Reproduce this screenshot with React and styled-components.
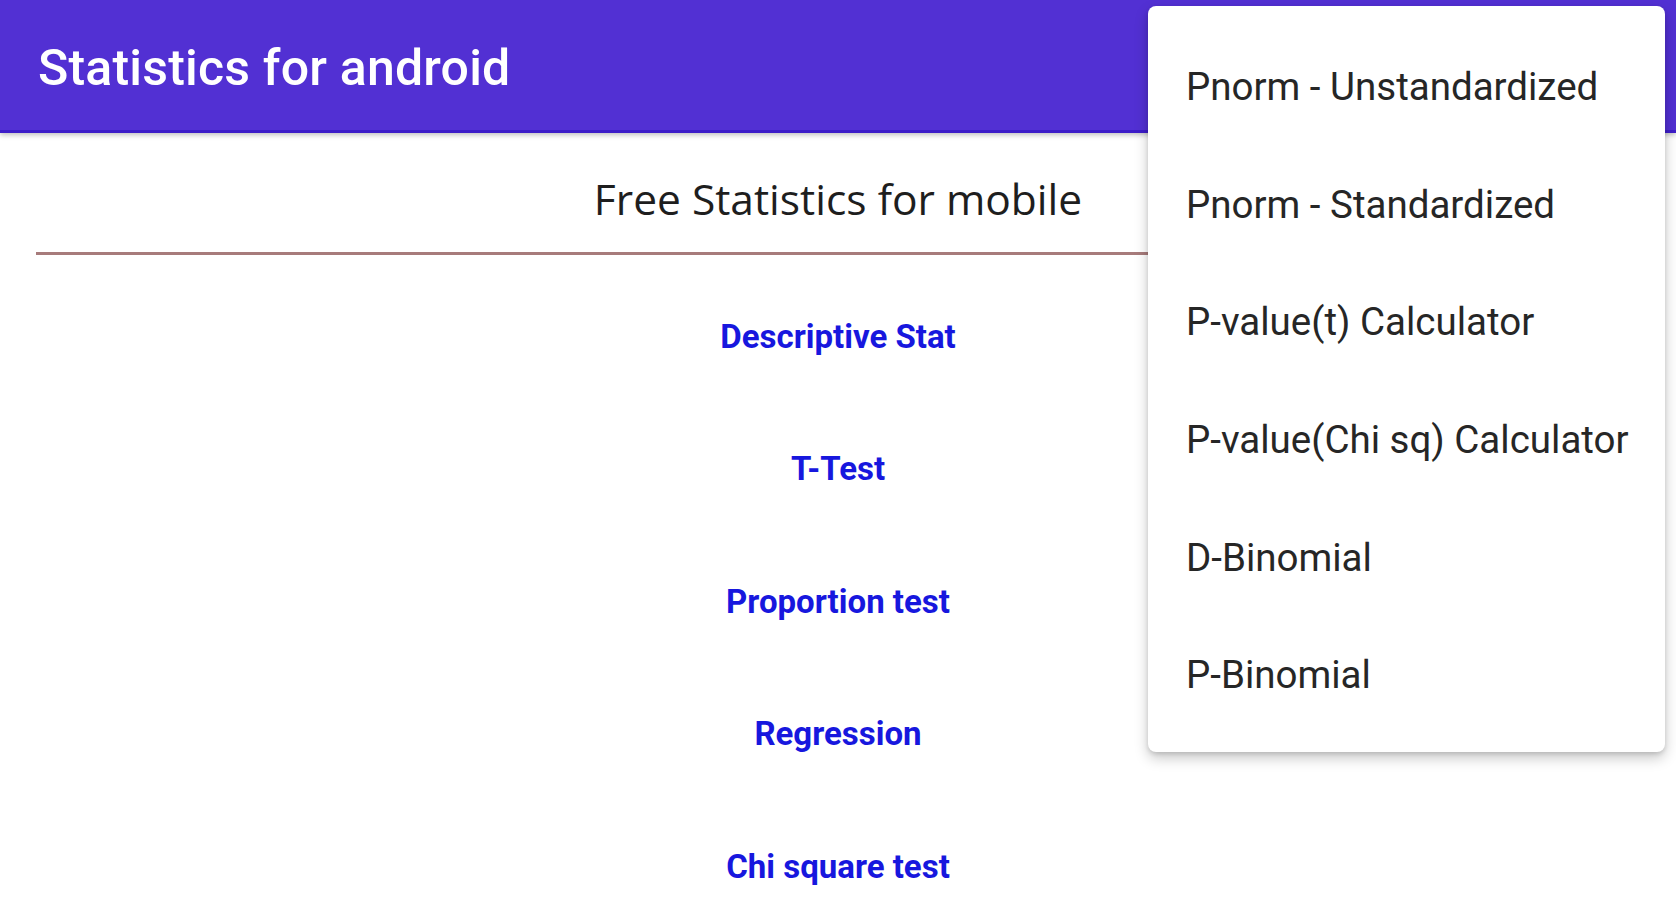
import React from "react";
import styled, { createGlobalStyle } from "styled-components";

const GlobalStyle = createGlobalStyle`
  html, body {
    margin: 0;
    padding: 0;
    background: #ffffff;
  }
  body {
    font-family: Roboto, "Liberation Sans", sans-serif;
    overflow: hidden;
  }
`;

const tests = [
  "Descriptive Stat",
  "T-Test",
  "Proportion test",
  "Regression",
  "Chi square test",
];

const menuItems = [
  "Pnorm - Unstandardized",
  "Pnorm - Standardized",
  "P-value(t) Calculator",
  "P-value(Chi sq) Calculator",
  "D-Binomial",
  "P-Binomial",
];

const App = () => {
  return (
    <Screen>
      <GlobalStyle />
      <AppBar>
        <Title>Statistics for android</Title>
      </AppBar>
      <Content>
        <Subtitle>Free Statistics for mobile</Subtitle>
        <Divider />
        <LinkList>
          {tests.map((t) => (
            <LinkRow key={t}>
              <TestLink>{t}</TestLink>
            </LinkRow>
          ))}
        </LinkList>
      </Content>
      <Menu>
        {menuItems.map((m) => (
          <MenuItem key={m}>{m}</MenuItem>
        ))}
      </Menu>
    </Screen>
  );
};

const Screen = styled.div`
  position: relative;
  width: 1676px;
  height: 900px;
  overflow: hidden;
  background: #ffffff;
`;

const AppBar = styled.header`
  box-sizing: border-box;
  height: 133px;
  background: #5230d3;
  border-bottom: 3px solid #3d1dc9;
  box-shadow: 0 2px 5px rgba(0, 0, 0, 0.25);
  display: flex;
  align-items: center;
  padding: 5px 38px 0;
`;

const Title = styled.h1`
  margin: 0;
  color: #ffffff;
  font-family: Roboto, "Liberation Sans", sans-serif;
  font-weight: 500;
  font-size: 50px;
  letter-spacing: 0.2px;
`;

const Content = styled.main`
  display: flex;
  flex-direction: column;
`;

const Subtitle = styled.div`
  box-sizing: border-box;
  height: 119px;
  padding-top: 12px;
  display: flex;
  align-items: center;
  justify-content: center;
  font-family: "Open Sans", "Noto Sans", sans-serif;
  font-size: 42.5px;
  color: #1e1e1e;
`;

const Divider = styled.div`
  height: 3px;
  margin: 0 36px;
  background: #a77b7b;
`;

const LinkList = styled.div`
  display: flex;
  flex-direction: column;
  padding-top: 15px;
`;

const LinkRow = styled.div`
  height: 132.5px;
  display: flex;
  align-items: center;
  justify-content: center;
`;

const TestLink = styled.span`
  font-family: Roboto, "Liberation Sans", sans-serif;
  font-weight: 700;
  font-size: 33px;
  color: #1717de;
  cursor: pointer;
`;

const Menu = styled.ul`
  position: absolute;
  top: 6px;
  left: 1148px;
  width: 517px;
  box-sizing: border-box;
  margin: 0;
  padding: 22px 0 18px;
  list-style: none;
  background: #ffffff;
  border-radius: 8px;
  box-shadow: 0 6px 14px rgba(0, 0, 0, 0.22), 0 2px 4px rgba(0, 0, 0, 0.12);
`;

const MenuItem = styled.li`
  height: 117.6px;
  display: flex;
  align-items: center;
  padding-left: 38px;
  font-family: Roboto, "Liberation Sans", sans-serif;
  font-size: 38.5px;
  color: #262626;
`;

export default App;
